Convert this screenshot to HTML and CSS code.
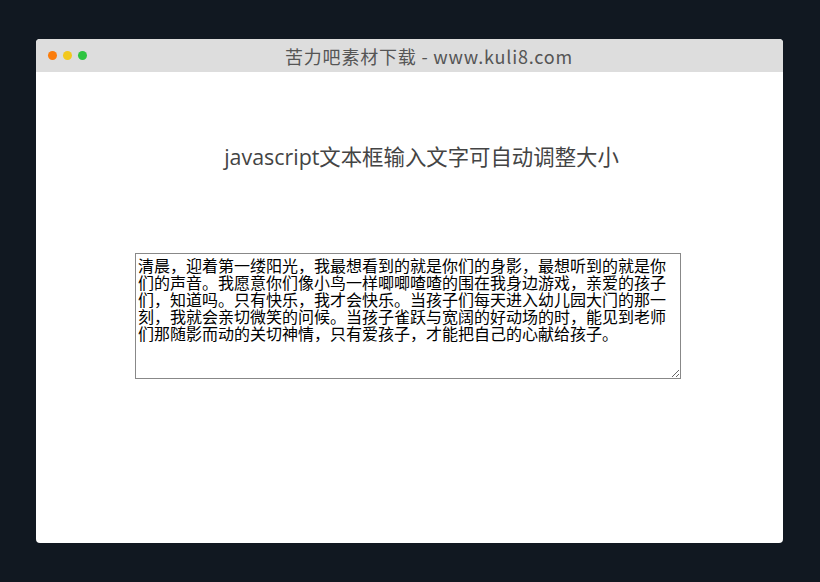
FILE: index.html
```html
<!DOCTYPE html>
<html lang="zh-CN">

<head>
  <meta charset="UTF-8">
  <meta name="viewport" content="width=device-width, initial-scale=1.0">
  <title>javascript文本框输入文字可自动调整大小</title>
  <link rel="stylesheet" href="styles.css">
</head>

<body>
  <div class="window">
    <div class="title-bar">
      <div class="dots">
        <span class="dot dot-red"></span>
        <span class="dot dot-yellow"></span>
        <span class="dot dot-green"></span>
      </div>
      <div class="title">苦力吧素材下载 - www.kuli8.com</div>
    </div>
    <div class="content">
      <h1 class="page-heading">javascript文本框输入文字可自动调整大小</h1>
      <textarea class="auto-text" id="autoText">清晨，迎着第一缕阳光，我最想看到的就是你们的身影，最想听到的就是你们的声音。我愿意你们像小鸟一样唧唧喳喳的围在我身边游戏，亲爱的孩子们，知道吗。只有快乐，我才会快乐。当孩子们每天进入幼儿园大门的那一刻，我就会亲切微笑的问候。当孩子雀跃与宽阔的好动场的时，能见到老师们那随影而动的关切神情，只有爱孩子，才能把自己的心献给孩子。</textarea>
    </div>
  </div>
</body>

</html>
```

FILE: styles.css
```css
body {
  margin: 0;
  padding: 39px 0 0 36px;
  background-color: #111821;
  font-family: "Noto Sans CJK SC", sans-serif;
  min-height: 100vh;
  box-sizing: border-box;
}

.window {
  width: 747px;
  height: 504px;
  background: #fff;
  border-radius: 4px;
  overflow: hidden;
}

.title-bar {
  height: 33px;
  background: #dddddd;
  display: flex;
  align-items: center;
  padding-left: 12px;
}

.dots {
  display: flex;
  gap: 6px;
}

.dot {
  width: 9px;
  height: 9px;
  border-radius: 50%;
  display: block;
}

.dot-red {
  background: #fb7d0c;
}

.dot-yellow {
  background: #f2c81e;
}

.dot-green {
  background: #2ec440;
}

.title {
  flex: 1;
  text-align: center;
  font-size: 18px;
  color: #555;
  margin-right: 12px;
  letter-spacing: 0.8px;
}

.content {
  display: flex;
  flex-direction: column;
  align-items: flex-start;
}

.page-heading {
  align-self: center;
  margin: 71px 0 0 24px;
  font-family: "Open Sans", "Noto Sans CJK SC", sans-serif;
  font-size: 21.4px;
  font-weight: normal;
  color: #444;
  line-height: 28px;
}

.auto-text {
  margin: 82px 0 0 99px;
  width: 546px;
  height: 126px;
  box-sizing: border-box;
  border: 1px solid #888;
  padding: 3px 2px 2px;
  font-family: "Noto Sans CJK SC", sans-serif;
  font-size: 16px;
  line-height: 17px;
  color: #000;
  overflow: hidden;
}
```
